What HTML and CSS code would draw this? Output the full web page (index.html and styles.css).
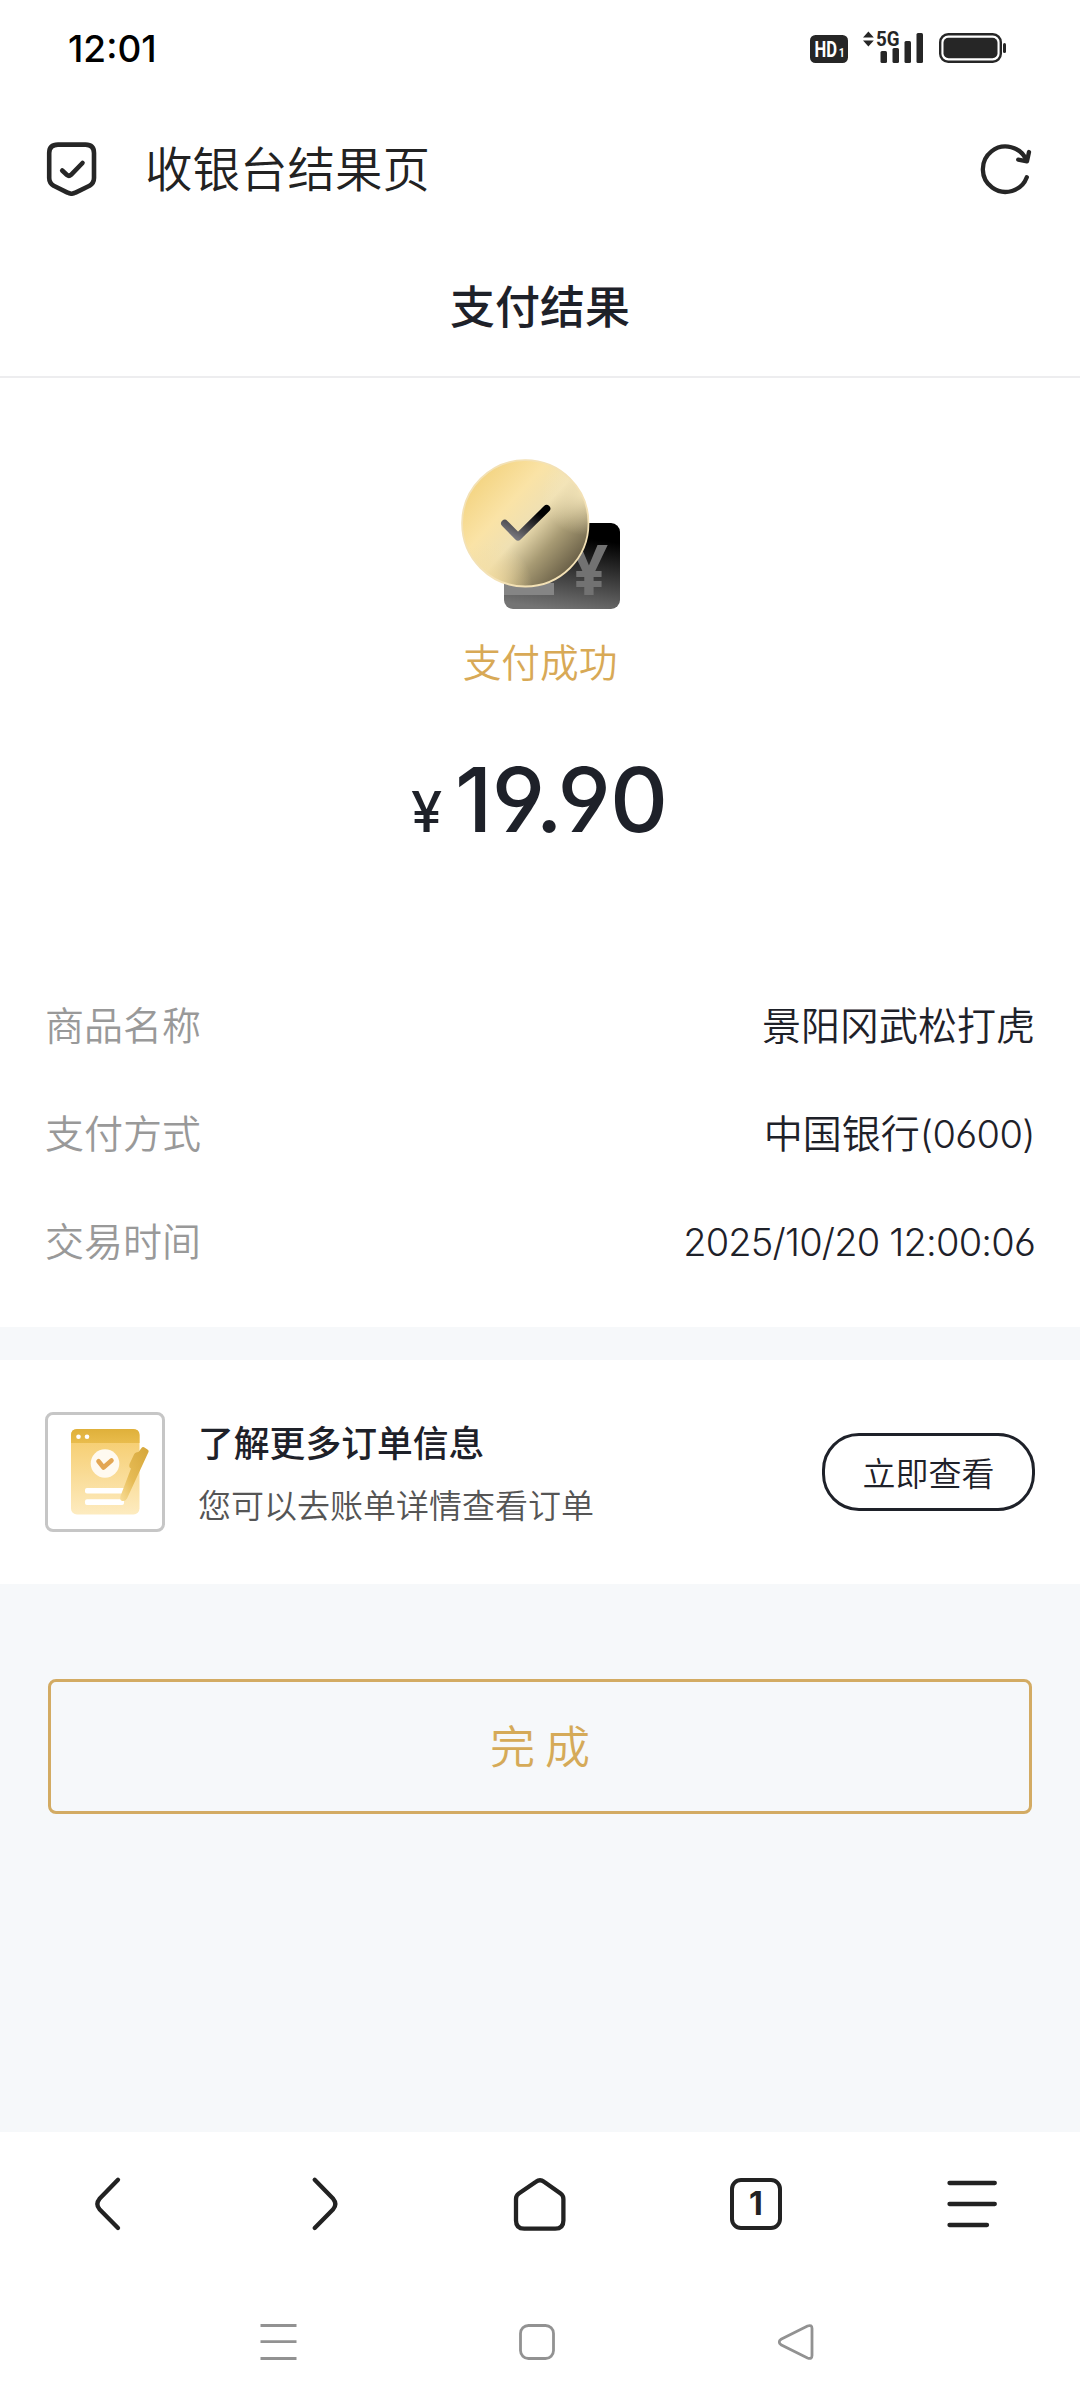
FILE: index.html
```html
<!DOCTYPE html>
<html lang="zh-CN">
<head>
<meta charset="utf-8">
<title>收银台结果页</title>
<link rel="stylesheet" href="styles.css">
</head>
<body>
<div class="status">
  <span class="clock">12:01</span>
  <svg class="status-icons" width="198" height="40" viewBox="810 28 198 40">
    <rect x="810" y="35" width="38" height="28" rx="5.5" fill="#262626"/>
    <text x="814.5" y="56.6" class="hd" textLength="22.5" lengthAdjust="spacingAndGlyphs">HD</text>
    <text x="838.8" y="56.6" class="hd-sub" textLength="6" lengthAdjust="spacingAndGlyphs">1</text>
    <path d="M863 37.5l5.4-6 5.4 6zM863 40.5l5.4 6 5.4-6z" fill="#262626"/>
    <text x="876" y="46.2" class="net" textLength="23.5" lengthAdjust="spacingAndGlyphs">5G</text>
    <g fill="#262626">
      <rect x="880.5" y="51" width="6.5" height="12" rx="1.5"/>
      <rect x="892.5" y="48" width="6.5" height="15" rx="1.5"/>
      <rect x="904.5" y="41" width="6.5" height="22" rx="1.5"/>
      <rect x="916.5" y="33" width="6.5" height="30" rx="1.5"/>
      <rect x="943.5" y="37.8" width="54" height="20.4" rx="5"/>
      <rect x="1003" y="43" width="3" height="10" rx="1.5"/>
    </g>
    <rect x="940.2" y="34.2" width="60.6" height="27.6" rx="8" fill="none" stroke="#262626" stroke-width="2.4"/>
  </svg>
</div>
<div class="browser-bar">
  <svg width="52" height="56" viewBox="46 140 52 56" fill="none" stroke="#262626" stroke-width="4.6" stroke-linecap="round" stroke-linejoin="round">
    <path d="M58 144.600H85.500Q94 144.600 94 153V178Q94 183 89.500 185.800L75.500 192.600Q71.500 194.800 67.500 192.600L53.700 185.800Q49.200 183 49.200 178V153Q49.200 144.600 58 144.600Z"/>
    <path d="M62.200 170.500L67 175Q69 176.600 71 174.800L82.500 163"/>
  </svg>
  <span class="page-name">收银台结果页</span>
  <svg width="56" height="56" viewBox="978 140 56 56" fill="none" stroke="#262626" stroke-width="4.300" stroke-linecap="round" stroke-linejoin="round">
    <path d="M1026.800 177.200A22.700 22.700 0 1 1 1026.500 160.500"/>
    <path d="M1029 152L1027 161.300L1018.200 159.600"/>
  </svg>
</div>
<h1 class="title">支付结果</h1>
<section class="result">
  <svg width="160" height="152" viewBox="460 458 160 152">
    <defs>
      <linearGradient id="card" x1=".6" y1="0" x2=".4" y2="1"><stop offset=".15" stop-color="#000"/><stop offset="1" stop-color="#747474"/></linearGradient>
      <linearGradient id="coin" x1=".05" y1=".25" x2=".8" y2=".93"><stop offset="0" stop-color="#f4d584"/><stop offset=".3" stop-color="#fae3a6"/><stop offset=".52" stop-color="#efe0b3"/><stop offset=".75" stop-color="#a79a73"/><stop offset="1" stop-color="#685e46"/></linearGradient>
      <radialGradient id="glow" gradientUnits="userSpaceOnUse" cx="490" cy="585" r="42"><stop offset="0" stop-color="#f6dea0" stop-opacity=".9"/><stop offset="1" stop-color="#f6dea0" stop-opacity="0"/></radialGradient>
      <radialGradient id="glow2" gradientUnits="userSpaceOnUse" cx="584" cy="493" r="42"><stop offset="0" stop-color="#f8e9bd" stop-opacity=".9"/><stop offset="1" stop-color="#f8e9bd" stop-opacity="0"/></radialGradient>
      <linearGradient id="tick" x1="1" y1="0" x2=".2" y2="1"><stop offset=".2" stop-color="#000"/><stop offset="1" stop-color="#77767d"/></linearGradient>
    </defs>
    <rect x="504" y="523" width="116" height="86" rx="9" fill="url(#card)"/>
    <rect x="504" y="583" width="50" height="12" fill="#858585"/>
    <text x="570" y="595" class="yen-art" textLength="38" lengthAdjust="spacingAndGlyphs">¥</text>
    <circle cx="525.300" cy="523.300" r="63.200" fill="url(#coin)"/>
    <circle cx="525.300" cy="523.300" r="63.200" fill="url(#glow)"/>
    <circle cx="525.300" cy="523.300" r="63.200" fill="url(#glow2)" stroke="#f3e1b5" stroke-width="1.800"/>
    <path d="M504.800 523.500L518 536.800L546.600 508.700" fill="none" stroke="url(#tick)" stroke-width="7.400" stroke-linecap="round" stroke-linejoin="round"/>
  </svg>
  <p class="state">支付成功</p>
  <p class="price"><span class="yen">¥</span><span class="amount">19.90</span></p>
  <dl class="details">
    <div><dt>商品名称</dt><dd>景阳冈武松打虎</dd></div>
    <div><dt>支付方式</dt><dd>中国银行<span class="num card-no">(0600)</span></dd></div>
    <div><dt>交易时间</dt><dd><span class="num date">2025/10/20 12:00:06</span></dd></div>
  </dl>
</section>
<section class="order">
  <div class="thumb">
    <svg width="114" height="114" viewBox="48 1415 114 114">
      <defs>
        <linearGradient id="doc" x1="0" y1="0" x2="0" y2="1"><stop offset="0" stop-color="#f5ca66"/><stop offset="1" stop-color="#fdebc0"/></linearGradient>
        <linearGradient id="top" x1="0" y1="0" x2="0" y2="1"><stop offset="0" stop-color="#dfb03a"/><stop offset="1" stop-color="#e9bc4c"/></linearGradient>
        <linearGradient id="pen" x1="1" y1="0" x2="0" y2="1"><stop offset="0" stop-color="#d5a63a"/><stop offset=".6" stop-color="#e6bb55"/><stop offset="1" stop-color="#f8dd98"/></linearGradient>
      </defs>
      <rect x="71" y="1429" width="68.500" height="85.500" rx="6" fill="url(#doc)"/>
      <path d="M71 1443V1435Q71 1429 77 1429H133Q139.500 1429 139.500 1435V1443Z" fill="url(#top)"/>
      <circle cx="78.500" cy="1436.800" r="2.300" fill="#fff"/><circle cx="87" cy="1436.800" r="2.300" fill="#fff"/>
      <circle cx="105" cy="1463.500" r="14.300" fill="#fffaf0"/>
      <path d="M98.500 1461.200L103.500 1467.500L111.500 1460.500" fill="none" stroke="#e3a653" stroke-width="4.600" stroke-linecap="round" stroke-linejoin="round"/>
      <rect x="85" y="1488" width="41" height="5.500" rx="2" fill="#fff"/><rect x="85" y="1499.300" width="39" height="5.700" rx="2" fill="#fff"/>
      <path d="M141.500 1448Q142.500 1446.500 144 1447.200L147.500 1449.500Q149.300 1450.500 148.500 1452L127 1498.500Q125 1502 121.500 1500.800Q119.500 1499.500 120.500 1496L131 1468.500Q128.500 1467.500 129.500 1464L134 1454.500Q135 1452 138.500 1452Z" fill="url(#pen)"/>
    </svg>
  </div>
  <div class="order-text">
    <h2>了解更多订单信息</h2>
    <p>您可以去账单详情查看订单</p>
  </div>
  <button class="view">立即查看</button>
</section>
<main class="actions"><button class="done">完 成</button></main>
<nav class="toolbar">
  <svg viewBox="0 0 60 60"><path d="M40 5.700L21.500 24.800Q17.200 30 21.500 35.200L40 54"/></svg>
  <svg viewBox="0 0 60 60"><path d="M20.700 5.700L39.200 24.800Q43.500 30 39.200 35.200L20.700 54"/></svg>
  <svg viewBox="0 0 60 60"><path d="M26 7.800L8.800 19.500Q6 21.500 6 25V46.500Q6 54.700 14.200 54.700H45.200Q53.400 54.700 53.400 46.500V25Q53.400 21.500 50.600 19.500L34 7.800Q30 4.800 26 7.800Z"/></svg>
  <span class="tabs">1</span>
  <svg viewBox="0 0 60 60"><path d="M7.500 9H52.800M7.500 30H52.800M7.500 51H45"/></svg>
</nav>
<div class="system">
  <svg viewBox="0 0 40 40"><path d="M1.500 3.500H37.500M1.500 19.700H37.500M1.500 36.500H37.500"/></svg>
  <svg viewBox="0 0 40 40"><rect x="1.500" y="3.500" width="33" height="33" rx="8"/></svg>
  <svg viewBox="0 0 40 40"><path d="M3 17.300L29.500 4Q34 2.400 34 6.500V33.500Q34 37.600 29.500 36L3 22.700Q-.5 20 3 17.300Z"/></svg>
</div>
</body>
</html>
```
FILE: styles.css
```css
* { box-sizing: border-box; margin: 0; padding: 0; }
body { width: 1080px; height: 2408px; display: flex; flex-direction: column; background: #fff; color: #1e2129; font-family: "Noto Sans CJK SC", sans-serif; font-weight: 350; }
svg { display: block; flex: none; }
button { font: inherit; color: inherit; background: none; }
.status { height: 96px; padding: 0 72px 0 68px; display: flex; justify-content: space-between; align-items: center; }
.clock { font: 500 37px/40px Inter, sans-serif; color: #000; padding-top: 1px; }
.hd { font: 700 22px Roboto, sans-serif; fill: #fff; }
.hd-sub { font: 700 13px Roboto, sans-serif; fill: #fff; }
.net { font: 700 21px Roboto, sans-serif; fill: #262626; }
.yen-art { font: 700 69px "Open Sans", sans-serif; fill: #727272; }
.browser-bar { height: 144px; padding: 0 46px; display: flex; align-items: center; color: #222; }
.page-name { margin-left: 47px; padding-bottom: 3px; flex: 1; font-size: 47.500px; line-height: 60px; }
.title { height: 138px; border-bottom: 2px solid #ededef; font-size: 45px; font-weight: 500; line-height: 129px; text-align: center; }
.result { height: 949px; padding: 80px 45px 0; display: flex; flex-direction: column; }
.result > svg { margin-left: 415px; }
.state { margin-top: 25px; font-size: 38.700px; line-height: 50px; text-align: center; color: #d8a956; }
.price { margin-top: 55px; padding-left: 366px; height: 120px; display: flex; align-items: baseline; font-family: Inter, sans-serif; font-feature-settings: "cv03", "cv04"; line-height: 120px; }
.yen { width: 44px; font-size: 56px; font-weight: 500; }
.amount { font-size: 90px; font-weight: 500; letter-spacing: -.7px; }
.details { margin-top: 135px; }
.details div { height: 108px; display: flex; justify-content: space-between; font-size: 39px; line-height: 56px; }
dt { color: #999; }
.num { font-family: Inter, sans-serif; font-weight: 300; font-feature-settings: "cv03", "cv04"; font-size: 38px; }
.card-no { letter-spacing: -.6px; }
.date { letter-spacing: -.8px; }
.order { height: 257px; border-top: 33px solid #f6f8fa; padding: 0 45px; display: flex; align-items: center; }
.thumb { width: 120px; height: 120px; border: 3px solid #c6c6c6; border-radius: 8px; }
.order-text { flex: 1; margin-left: 33px; }
.order-text h2 { font-size: 35.800px; line-height: 50px; font-weight: 500; }
.order-text p { margin-top: 13px; font-size: 33px; line-height: 50px; color: #555; }
.view { width: 213px; height: 78px; border: 3px solid #1e2129; border-radius: 37px; font-size: 33px; }
.actions { height: 548px; padding: 95px 48px 0; background: #f6f8fa; }
.done { width: 984px; height: 135px; padding-bottom: 4px; border: 3px solid #d3ab63; border-radius: 8px; color: #d5aa58; font-size: 45px; }
.toolbar { height: 144px; padding: 0 78px; display: flex; justify-content: space-between; align-items: center; }
.toolbar svg { width: 60px; height: 60px; fill: none; stroke: #222; stroke-width: 4.300px; stroke-linecap: round; stroke-linejoin: round; }
.tabs { width: 52px; height: 52px; margin: 0 4px; border: 4px solid #222; border-radius: 11px; font: 700 32px/43px Inter, sans-serif; text-align: center; color: #222; }
.system { height: 132px; padding: 0 262px 0 259px; display: flex; justify-content: space-between; align-items: center; }
.system svg { width: 40px; height: 40px; fill: none; stroke: #929292; stroke-width: 2.800px; }
```
